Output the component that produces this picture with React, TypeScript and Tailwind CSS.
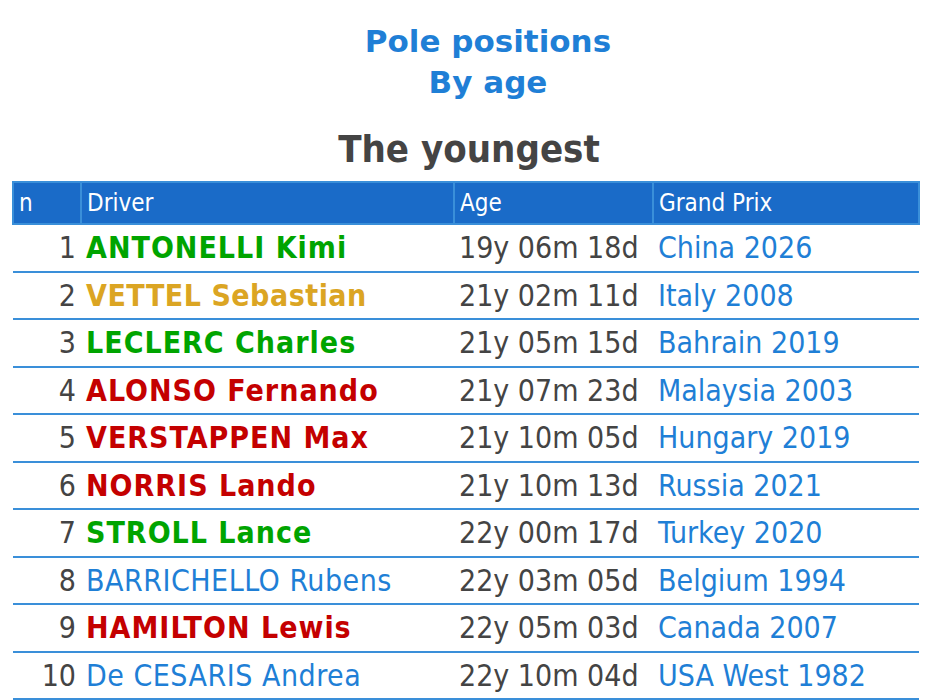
const rows = [
  { n: 1, name: 'ANTONELLI Kimi', kind: 'green', age: '19y 06m 18d', gp: 'China 2026' },
  { n: 2, name: 'VETTEL Sebastian', kind: 'gold', age: '21y 02m 11d', gp: 'Italy 2008' },
  { n: 3, name: 'LECLERC Charles', kind: 'green', age: '21y 05m 15d', gp: 'Bahrain 2019' },
  { n: 4, name: 'ALONSO Fernando', kind: 'red', age: '21y 07m 23d', gp: 'Malaysia 2003' },
  { n: 5, name: 'VERSTAPPEN Max', kind: 'red', age: '21y 10m 05d', gp: 'Hungary 2019' },
  { n: 6, name: 'NORRIS Lando', kind: 'red', age: '21y 10m 13d', gp: 'Russia 2021' },
  { n: 7, name: 'STROLL Lance', kind: 'green', age: '22y 00m 17d', gp: 'Turkey 2020' },
  { n: 8, name: 'BARRICHELLO Rubens', kind: 'plain', age: '22y 03m 05d', gp: 'Belgium 1994' },
  { n: 9, name: 'HAMILTON Lewis', kind: 'red', age: '22y 05m 03d', gp: 'Canada 2007' },
  { n: 10, name: 'De CESARIS Andrea', kind: 'plain', age: '22y 10m 04d', gp: 'USA West 1982' },
]

const nameClass: Record<string, string> = {
  green: 'font-bold tracking-[1px] text-[#00a400]',
  gold: 'font-bold tracking-[0.5px] text-[#dba523]',
  red: 'font-bold tracking-[1px] text-[#c40000]',
  plain: 'tracking-[0.5px] text-[#1f7fd6]',
}

export default function App() {
  return (
    <main className="w-[938px] h-[700px] overflow-hidden bg-white font-['DejaVu_Sans_Condensed','DejaVu_Sans',sans-serif]">
      <div className="flex flex-col items-center pt-[21px]">
        <h1 className="pl-[38px] text-[31px] leading-[41px] font-bold text-[#1f7fd6] text-center font-['DejaVu_Sans',sans-serif]">
          Pole positions<br />By age
        </h1>
        <h2 className="mt-[23px] text-[38px] leading-[46px] font-bold text-[#444]">The youngest</h2>
      </div>
      <table className="mt-[9px] ml-[12px] w-[906px] border-collapse table-fixed text-[30px]">
        <colgroup>
          <col className="w-[68px]" />
          <col className="w-[373px]" />
          <col className="w-[199px]" />
          <col className="w-[266px]" />
        </colgroup>
        <thead>
          <tr className="bg-[#1a6bc8] text-white text-[24px] h-[42px]">
            <th className="border-2 border-[#3a8fd9] font-normal text-left px-[5px]">n</th>
            <th className="border-2 border-[#3a8fd9] font-normal text-left px-[5px]">Driver</th>
            <th className="border-2 border-[#3a8fd9] font-normal text-left px-[5px]">Age</th>
            <th className="border-2 border-[#3a8fd9] font-normal text-left px-[5px]">Grand Prix</th>
          </tr>
        </thead>
        <tbody>
          {rows.map((r) => (
            <tr key={r.n} className="h-[47.5px] border-b-2 border-[#3a8fd9]">
              <td className="text-right pr-[5px] text-[#444]">{r.n}</td>
              <td className={'px-[5px] whitespace-nowrap ' + nameClass[r.kind]}>{r.name}</td>
              <td className="px-[5px] text-[#444] whitespace-nowrap">{r.age}</td>
              <td className="px-[5px] text-[#1f7fd6] whitespace-nowrap">{r.gp}</td>
            </tr>
          ))}
        </tbody>
      </table>
    </main>
  )
}
